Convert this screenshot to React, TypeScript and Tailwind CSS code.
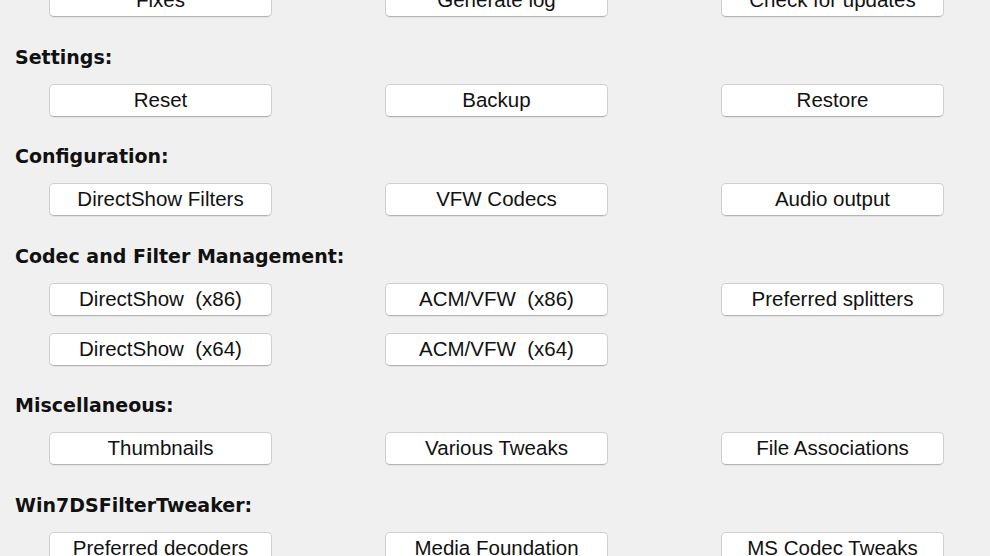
import React from "react";

const Btn = ({ label }: { label: string }) => (
  <div className="h-[33px] w-[223px] rounded-[5px] border border-[#cfcfcf] border-b-[#b4b4b4] bg-white shadow-[0_1px_0_rgba(0,0,0,0.06)] flex items-center justify-center whitespace-pre text-[20.5px] leading-none text-[#111] font-['Liberation_Sans',Arial,sans-serif]">
    {label}
  </div>
);

const Rows = ({ rows }: { rows: (string | null)[][] }) => (
  <div className="pl-[49px] flex flex-col gap-[17px]">
    {rows.map((r, i) => (
      <div key={i} className="grid grid-cols-[223px_223px_223px] gap-x-[113px]">
        {r.map((l, j) => (l ? <Btn key={j} label={l} /> : <div key={j} />))}
      </div>
    ))}
  </div>
);

const Heading = ({ text }: { text: string }) => (
  <div className="pl-[15px] h-[22px] leading-[22px] mt-[28.5px] mb-[16px] text-[19px] font-bold text-[#111] font-['DejaVu_Sans',Verdana,sans-serif]">
    {text}
  </div>
);

export default function App() {
  return (
    <div className="w-[990px] h-[556px] overflow-hidden bg-[#f0f0f0]">
      <div className="mt-[-16px]">
        <Rows rows={[["Fixes", "Generate log", "Check for updates"]]} />
        <Heading text="Settings:" />
        <Rows rows={[["Reset", "Backup", "Restore"]]} />
        <Heading text="Configuration:" />
        <Rows rows={[["DirectShow Filters", "VFW Codecs", "Audio output"]]} />
        <Heading text="Codec and Filter Management:" />
        <Rows
          rows={[
            ["DirectShow  (x86)", "ACM/VFW  (x86)", "Preferred splitters"],
            ["DirectShow  (x64)", "ACM/VFW  (x64)", null],
          ]}
        />
        <Heading text="Miscellaneous:" />
        <Rows rows={[["Thumbnails", "Various Tweaks", "File Associations"]]} />
        <Heading text="Win7DSFilterTweaker:" />
        <Rows rows={[["Preferred decoders", "Media Foundation", "MS Codec Tweaks"]]} />
      </div>
    </div>
  );
}
